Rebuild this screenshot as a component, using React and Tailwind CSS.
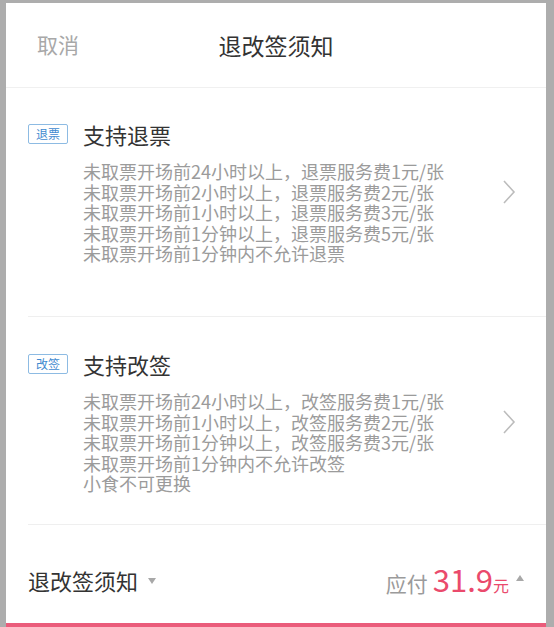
import React from "react";

const font = { fontFamily: '"Noto Sans CJK SC", "Noto Sans", sans-serif' };

function Chevron() {
  return (
    <svg width="16" height="26" viewBox="0 0 16 26" className="shrink-0">
      <polyline points="3,2 13,13 3,24" fill="none" stroke="#bcbcbc" strokeWidth="1.6" />
    </svg>
  );
}

function Section({ badge, title, lines, pad }) {
  return (
    <div className={`flex items-center pl-[22px] pr-[29px] ${pad}`}>
      <div className="flex-1 flex flex-col">
        <div className="flex items-center h-[28px]">
          <span className="w-[40px] h-[20px] flex items-center justify-center border border-[#8dbbe3] rounded-[2px] text-[12px] leading-none text-[#3f8ad0]">
            {badge}
          </span>
          <span className="ml-[15px] text-[22px] leading-[28px] text-[#333333]">{title}</span>
        </div>
        <div className="mt-[13px] pl-[55px] flex flex-col text-[18px] leading-[20.6px] text-[#9b9b9b]">
          {lines.map((l, i) => (
            <div key={i}>{l}</div>
          ))}
        </div>
      </div>
      <Chevron />
    </div>
  );
}

export default function App() {
  return (
    <div className="w-[554px] h-[627px] bg-[#adadad] pt-[3px] pl-[6px] pr-[8px] overflow-hidden" style={font}>
      <div className="h-[624px] bg-white flex flex-col border-b-[4px] border-[#ea5c7b]">
        <div className="h-[85px] shrink-0 relative flex items-center border-b border-[#f0f0f0]">
          <span className="ml-[31px] text-[21px] text-[#a8a8a8]">取消</span>
          <span className="absolute left-0 right-0 text-center text-[23px] text-[#333333]">退改签须知</span>
        </div>
        <Section
          badge="退票"
          title="支持退票"
          pad="pt-[32px] pb-[52px]"
          lines={[
            "未取票开场前24小时以上，退票服务费1元/张",
            "未取票开场前2小时以上，退票服务费2元/张",
            "未取票开场前1小时以上，退票服务费3元/张",
            "未取票开场前1分钟以上，退票服务费5元/张",
            "未取票开场前1分钟内不允许退票",
          ]}
        />
        <div className="ml-[22px] h-px bg-[#efefef]" />
        <Section
          badge="改签"
          title="支持改签"
          pad="pt-[33px] pb-[30px]"
          lines={[
            "未取票开场前24小时以上，改签服务费1元/张",
            "未取票开场前1小时以上，改签服务费2元/张",
            "未取票开场前1分钟以上，改签服务费3元/张",
            "未取票开场前1分钟内不允许改签",
            "小食不可更换",
          ]}
        />
        <div className="ml-[22px] h-px bg-[#efefef]" />
        <div className="flex-1 flex items-center justify-between pl-[22px] pr-[22px] pt-[14px]">
          <div className="flex items-center">
            <span className="text-[22px] text-[#333333]">退改签须知</span>
            <svg width="8" height="6" viewBox="0 0 8 6" className="ml-[10px]">
              <polygon points="0,0 8,0 4,6" fill="#a8a8a8" />
            </svg>
          </div>
          <div className="flex items-baseline">
            <span className="text-[21px] text-[#9b9b9b]">应付</span>
            <span className="ml-[5px] text-[31px] leading-none text-[#ea4a6c]">31.9</span>
            <span className="text-[16px] text-[#ea4a6c]">元</span>
            <svg width="8" height="6" viewBox="0 0 8 6" className="ml-[7px] self-center -mt-[6px]">
              <polygon points="4,0 8,6 0,6" fill="#a8a8a8" />
            </svg>
          </div>
        </div>
      </div>
    </div>
  );
}
